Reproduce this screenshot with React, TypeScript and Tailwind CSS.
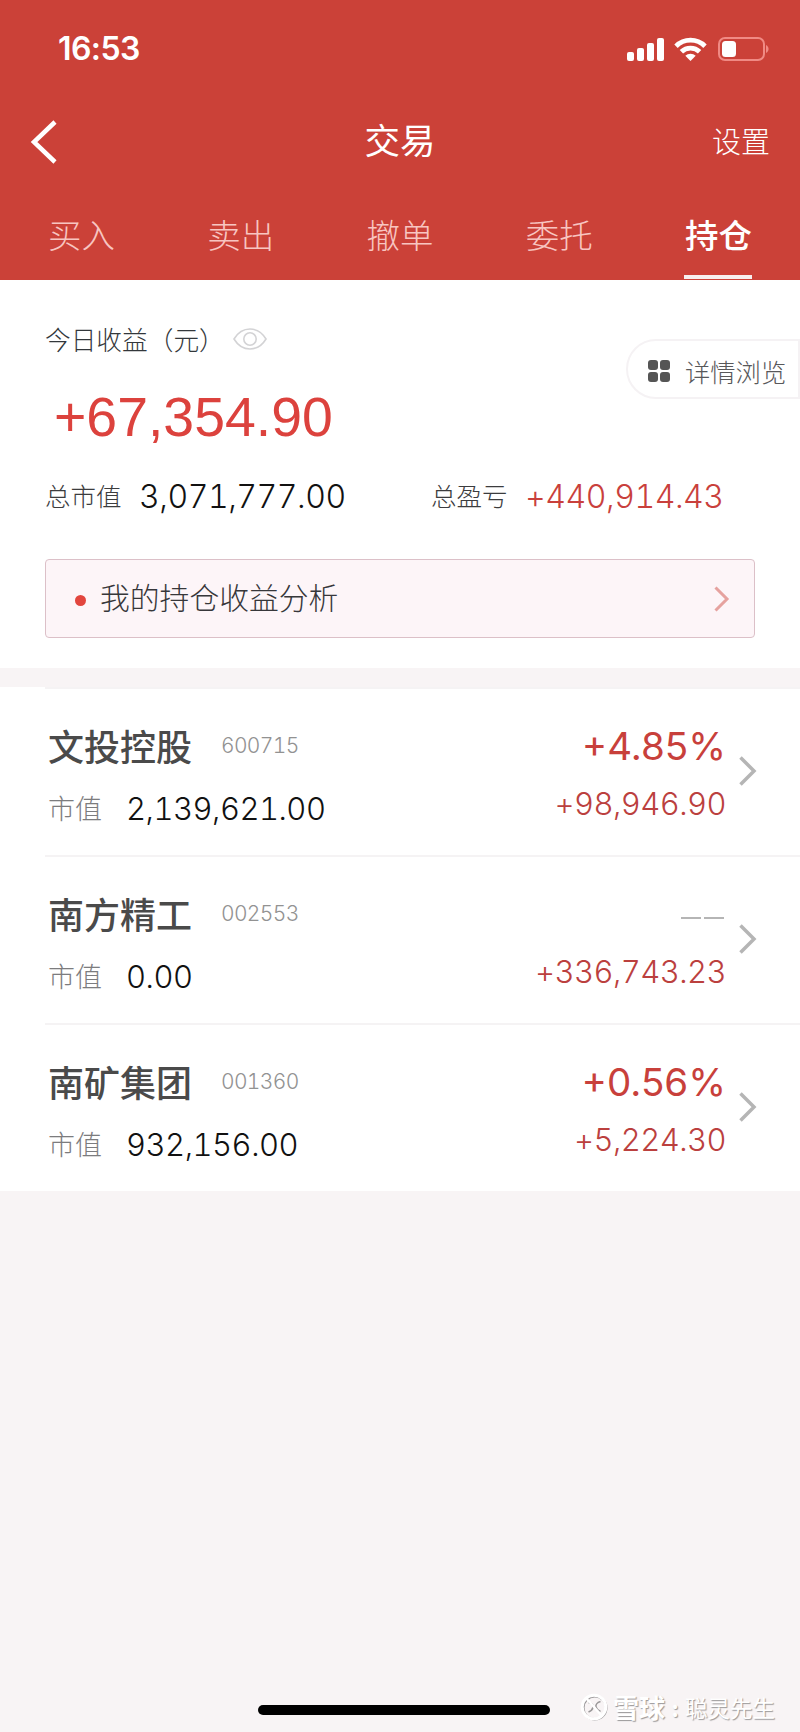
import React from "react";

const tabs = ["买入", "卖出", "撤单", "委托", "持仓"];

const holdings = [
  {
    name: "文投控股",
    code: "600715",
    value: "2,139,621.00",
    percent: "+4.85%",
    profit: "+98,946.90",
  },
  {
    name: "南方精工",
    code: "002553",
    value: "0.00",
    percent: null,
    profit: "+336,743.23",
  },
  {
    name: "南矿集团",
    code: "001360",
    value: "932,156.00",
    percent: "+0.56%",
    profit: "+5,224.30",
  },
];

const StatusBar = () => (
  <div className="flex h-[97px] items-center justify-between pl-[58px] pr-[31px]">
    <span className="font-['Inter'] text-[32px] font-semibold leading-none tracking-[-0.6px]">
      16:53
    </span>
    <div className="flex items-center">
      {/* Signal */}
      <svg width="38" height="24" viewBox="0 0 38 24" fill="#fff">
        <rect x="0" y="15" width="7" height="9" rx="2" />
        <rect x="10" y="11" width="7" height="13" rx="2" />
        <rect x="20" y="6" width="7" height="18" rx="2" />
        <rect x="30" y="1" width="7" height="23" rx="2" />
      </svg>
      {/* Wifi */}
      <svg
        className="ml-[9px]"
        width="33"
        height="24"
        viewBox="0 0 33 24"
        fill="none"
        stroke="#fff"
        strokeWidth="4.8"
      >
        <path d="M2 9.2a20.5 20.5 0 0 1 29 0" />
        <path d="M7.4 14.8a13 13 0 0 1 18.2 0" />
        <path
          d="M16.5 24l-5.2-5.2a7.6 7.6 0 0 1 10.4 0z"
          fill="#fff"
          stroke="none"
        />
      </svg>
      {/* Battery */}
      <svg
        className="ml-[10px]"
        width="52"
        height="24"
        viewBox="0 0 52 24"
        fill="none"
      >
        <rect
          x="2"
          y="1"
          width="45"
          height="22"
          rx="6"
          stroke="#f08a84"
          strokeWidth="2"
        />
        <rect x="5" y="4" width="14" height="16" rx="3.5" fill="#fff" />
        <path d="M49 8c3.4 1.5 3.4 6.5 0 8z" fill="#f08a84" />
      </svg>
    </div>
  </div>
);

const Header = () => (
  <header className="h-[280px] bg-[#cb4138] text-white">
    <StatusBar />
    <div className="grid h-[90px] grid-cols-3 items-center pl-[30px] pr-[30px]">
      <svg
        width="28"
        height="44"
        viewBox="0 0 28 44"
        fill="none"
        stroke="#fff"
        strokeWidth="4.5"
      >
        <path d="M25 2L4 22l21 20" />
      </svg>
      <h1 className="pb-[6px] text-center text-[35.5px] font-normal leading-none">
        交易
      </h1>
      <span className="pb-[4px] text-right text-[29px] font-light leading-none">
        设置
      </span>
    </div>
    <nav className="flex h-[93px] pl-[2px] pr-[2px]">
      {tabs.map((tab, index) => (
        <div
          key={index}
          className={
            index === 4
              ? "flex flex-1 flex-col items-center justify-between pb-px pt-[30px] text-[33.5px] font-medium leading-none"
              : "flex flex-1 flex-col items-center justify-between pt-[30px] text-[33.5px] font-light leading-none text-[#f8c5c1]"
          }
        >
          {tab}
          {index === 4 && <div className="h-[4px] w-[68px] bg-[#f7efef]"></div>}
        </div>
      ))}
    </nav>
  </header>
);

const Summary = () => (
  <section className="relative h-[388px] bg-white pt-[45px]">
    <div className="flex h-[28px] items-center pl-[45px]">
      <span className="text-[25.7px] font-light leading-none text-[#33373b]">
        今日收益（元）
      </span>
      <svg
        className="ml-[8px]"
        width="34"
        height="22"
        viewBox="0 0 34 22"
        fill="none"
        stroke="#d3d3d5"
        strokeWidth="1.6"
      >
        <path d="M1 11C9-2.3 25-2.3 33 11C25 24.3 9 24.3 1 11z" />
        <circle cx="17" cy="11" r="6.2" />
      </svg>
    </div>
    <div className="mt-[34px] pl-[54px] font-['Liberation_Sans'] text-[55.4px] leading-[60px] text-[#dc423d]">
      +67,354.90
    </div>
    <div className="mt-[29px] flex h-[40px] items-center pl-[45px]">
      <span className="w-[94px] pb-[2px] text-[25.5px] font-light leading-none text-[#3c3c3e]">
        总市值
      </span>
      <span className="w-[292px] pt-[2px] font-['Inter'] text-[32px] font-light leading-none tracking-[-0.45px] tabular-nums text-[#111]">
        3,071,777.00
      </span>
      <span className="w-[94px] pb-[2px] text-[25.5px] font-light leading-none text-[#3c3c3e]">
        总盈亏
      </span>
      <span className="pt-[2px] font-['Inter'] text-[32px] font-light leading-none tracking-[-0.45px] tabular-nums text-[#c9403c]">
        +440,914.43
      </span>
    </div>
    <div className="ml-[45px] mt-[43px] flex h-[79px] w-[710px] items-center rounded-[4px] border border-[#dcc0c8] bg-[#fdf5f8] pl-[29px] pr-[24px]">
      <div className="mt-[3px] h-[11px] w-[11px] rounded-full bg-[#e2453e]"></div>
      <span className="ml-[14px] flex-1 pb-[4px] text-[29.8px] font-light leading-none text-[#37373a]">
        我的持仓收益分析
      </span>
      <svg
        width="16"
        height="26"
        viewBox="0 0 16 26"
        fill="none"
        stroke="#e6a29f"
        strokeWidth="3"
      >
        <path d="M1.5 1.5L13 13L1.5 24.5" />
      </svg>
    </div>

    {/* floating entry on the right edge */}
    <div className="absolute right-0 top-[59px] flex h-[60px] w-[174px] items-center rounded-l-full border-2 border-[#f5f2f4] bg-white pl-[20px]">
      <div className="mt-[4px] grid grid-cols-2 gap-[2px]">
        <div className="h-[10px] w-[10px] rounded-[3px] bg-[#555]"></div>
        <div className="h-[10px] w-[10px] rounded-[3px] bg-[#555]"></div>
        <div className="h-[10px] w-[10px] rounded-[3px] bg-[#555]"></div>
        <div className="h-[10px] w-[10px] rounded-[3px] bg-[#555]"></div>
      </div>
      <span className="ml-[15px] whitespace-nowrap pt-[6px] text-[25.3px] font-light leading-none text-[#58585a]">
        详情浏览
      </span>
    </div>
  </section>
);

const Holdings = () => (
  <section className="bg-white">
    {holdings.map((item, index) => (
      <div key={index} className="pl-[45px]">
        <div className="h-[2px] bg-[#f5f3f4]"></div>
        <div className="flex h-[166px] items-center justify-between pl-[3px] pr-[43px]">
          <div className="pt-[10px]">
            <div className="flex h-[60px] items-center">
              <span className="w-[173px] text-[36px] font-medium leading-none text-[#4a4a4a]">
                {item.name}
              </span>
              <span className="font-['Inter'] text-[21px] font-light leading-none tracking-[-0.65px] tabular-nums text-[#929292]">
                {item.code}
              </span>
            </div>
            <div className="flex h-[64px] items-center">
              <span className="w-[78px] text-[27px] font-light leading-none text-[#7c7c7e]">
                市值
              </span>
              <span className="pt-[3px] font-['Inter'] text-[31px] font-light leading-none tracking-[-0.5px] tabular-nums text-[#111]">
                {item.value}
              </span>
            </div>
          </div>
          <div className="flex items-center">
            <div className="flex flex-col items-end">
              <div className="flex h-[60px] items-center pt-[5px]">
                {item.percent ? (
                  <span className="font-['Inter'] text-[38.5px] font-normal leading-none text-[#c8403b]">
                    {item.percent}
                  </span>
                ) : (
                  <div className="flex gap-[3px] pr-[2px] pt-[6px]">
                    <div className="h-[2px] w-[20px] bg-[#b5b5b5]"></div>
                    <div className="h-[2px] w-[20px] bg-[#b5b5b5]"></div>
                  </div>
                )}
              </div>
              <div className="flex h-[56px] items-center pt-[2px]">
                <span className="font-['Inter'] text-[31px] font-light leading-none tracking-[-0.55px] tabular-nums text-[#bb403e]">
                  {item.profit}
                </span>
              </div>
            </div>
            <svg
              className="mb-[2px] ml-[13px]"
              width="18"
              height="30"
              viewBox="0 0 18 30"
              fill="none"
              stroke="#b5b5b5"
              strokeWidth="3.5"
            >
              <path d="M1.5 1.5L15 15L1.5 28.5" />
            </svg>
          </div>
        </div>
      </div>
    ))}
  </section>
);

const BottomBar = () => (
  <footer className="flex h-[44px] items-center pl-[258px]">
    <div className="h-[10px] w-[292px] rounded-full bg-black"></div>
    <div className="ml-[30px] flex items-center pb-[6px] text-white [text-shadow:1px_1px_1px_#9a9899]">
      <svg width="28" height="28" viewBox="0 0 28 28" fill="none">
        <circle cx="14.8" cy="14.8" r="11.5" stroke="#999798" strokeWidth="2.5" />
        <circle cx="14" cy="14" r="11.8" stroke="#fff" strokeWidth="3" />
        <path
          d="M8.5 9.5c3.5 1 5 3 4.5 5s-2 3.500-4.500 4.500M20.500 8.500c-3.500 1-5 3.500-4.500 5.500s2 3.500 4.500 4.500"
          stroke="#999798"
          strokeWidth="1.6"
        />
        <path d="M6 5l16 18" stroke="#fff" strokeWidth="2.5" />
      </svg>
      <span className="ml-[5px] text-[26px] font-bold leading-none">雪球</span>
      <span className="w-[20px] text-center text-[22px] font-bold leading-none">
        :
      </span>
      <span className="text-[22.5px] font-normal leading-none">聪灵先生</span>
    </div>
  </footer>
);

const App = () => {
  return (
    <div className="flex h-[1732px] w-[800px] flex-col overflow-hidden bg-[#f8f4f5] font-['Noto_Sans_CJK_SC',sans-serif]">
      <Header />
      <Summary />
      <div className="h-[19px] shrink-0"></div>
      <Holdings />
      <div className="flex-1"></div>
      <BottomBar />
    </div>
  );
};

export default App;
